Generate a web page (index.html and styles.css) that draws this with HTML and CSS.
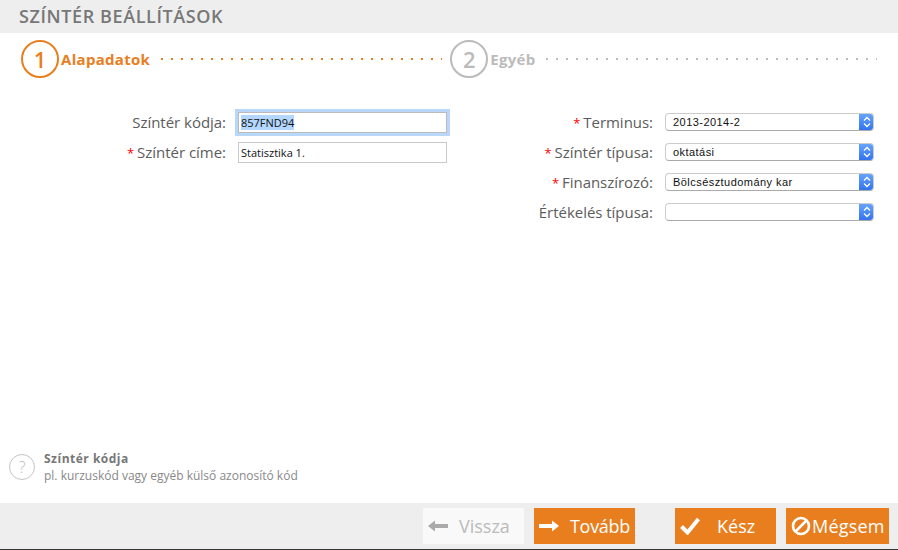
FILE: index.html
```html
<!DOCTYPE html>
<html lang="hu">
<head>
<meta charset="utf-8">
<title>Színtér beállítások</title>
<link rel="stylesheet" href="styles.css">
</head>
<body>
<div class="page">
  <header class="title-bar"><h1>SZÍNTÉR BEÁLLÍTÁSOK</h1></header>
  <nav class="steps">
    <div class="step active">
      <span class="num">1</span><span class="step-name">Alapadatok</span><span class="dots dots-a"></span>
    </div>
    <div class="step idle">
      <span class="num">2</span><span class="step-name">Egyéb</span><span class="dots dots-b"></span>
    </div>
  </nav>
  <main class="form">
    <div class="col col-left">
      <div class="row"><label class="lbl">Színtér kódja:</label><input class="txt focus" type="text" value="857FND94" id="code"></div>
      <div class="row"><label class="lbl"><span class="req">*</span> Színtér címe:</label><input class="txt" type="text" value="Statisztika 1."></div>
    </div>
    <div class="col col-right">
      <div class="row"><label class="lbl"><span class="req">*</span> Terminus:</label><div class="sel"><span class="val">2013-2014-2</span><span class="arrows"><svg width="8" height="12" viewBox="0 0 8 12"><path d="M1 4.5 4 1.5 7 4.5M1 7.5 4 10.5 7 7.5" fill="none" stroke="#fff" stroke-width="1.3"/></svg></span></div></div>
      <div class="row"><label class="lbl"><span class="req">*</span> Színtér típusa:</label><div class="sel"><span class="val">oktatási</span><span class="arrows"><svg width="8" height="12" viewBox="0 0 8 12"><path d="M1 4.5 4 1.5 7 4.5M1 7.5 4 10.5 7 7.5" fill="none" stroke="#fff" stroke-width="1.3"/></svg></span></div></div>
      <div class="row"><label class="lbl"><span class="req">*</span> Finanszírozó:</label><div class="sel"><span class="val">Bölcsésztudomány kar</span><span class="arrows"><svg width="8" height="12" viewBox="0 0 8 12"><path d="M1 4.5 4 1.5 7 4.5M1 7.5 4 10.5 7 7.5" fill="none" stroke="#fff" stroke-width="1.3"/></svg></span></div></div>
      <div class="row"><label class="lbl">Értékelés típusa:</label><div class="sel"><span class="val"></span><span class="arrows"><svg width="8" height="12" viewBox="0 0 8 12"><path d="M1 4.5 4 1.5 7 4.5M1 7.5 4 10.5 7 7.5" fill="none" stroke="#fff" stroke-width="1.3"/></svg></span></div></div>
    </div>
  </main>
  <aside class="help">
    <span class="q">?</span>
    <div class="help-text">
      <strong>Színtér kódja</strong>
      <span>pl. kurzuskód vagy egyéb külső azonosító kód</span>
    </div>
  </aside>
  <footer class="actions">
    <button class="btn disabled b-back"><svg width="20" height="14" viewBox="0 0 20 14"><path d="M0 7 7 1.5V5H20V9H7V12.5Z" fill="#aaa"/></svg><span class="t-back">Vissza</span></button>
    <button class="btn b-next"><svg width="20" height="14" viewBox="0 0 20 14"><path d="M20 7 13 1.5V5H0V9H13V12.5Z" fill="#fff"/></svg><span class="t-next">Tovább</span></button>
    <button class="btn b-done"><svg width="20" height="18" viewBox="0 0 20 18"><path d="M1.5 9.5 7.5 15.5 18.5 2" fill="none" stroke="#fff" stroke-width="4"/></svg><span class="t-done">Kész</span></button>
    <button class="btn b-cancel"><svg width="20" height="20" viewBox="0 0 20 20"><circle cx="10" cy="10" r="8" fill="none" stroke="#fff" stroke-width="2.6"/><path d="M4.5 15.5 15.5 4.5" stroke="#fff" stroke-width="2.6"/></svg><span class="t-cancel">Mégsem</span></button>
  </footer>
</div>
<script src="app.js"></script>
</body>
</html>
```
FILE: app.js
```js
var el = document.getElementById('code');
el.focus();
el.select();
```
FILE: styles.css
```css
* { box-sizing: border-box; }
html, body { margin: 0; padding: 0; height: 100%; background: #fff; overflow: hidden; }
body { font-family: "Open Sans", sans-serif; color: #555; }
.page { width: 898px; height: 550px; display: flex; flex-direction: column; border-bottom: 1px solid #333; }

.title-bar { height: 33px; background: #eee; padding-left: 19px; flex: none; }
.title-bar h1 { margin: 0; font-size: 18px; line-height: 33px; font-weight: 600; color: #777; letter-spacing: 0.6px; }

.steps { display: flex; height: 45px; padding: 7px 0 0 21px; flex: none; }
.step { display: flex; align-items: center; height: 38px; }
.num { width: 38px; height: 38px; border: 2px solid currentColor; border-radius: 50%; display: flex; align-items: center; justify-content: center; font-size: 22px; font-weight: 600; line-height: 1; flex: none; }
.step-name { font-size: 15px; font-weight: 700; margin-left: 2px; letter-spacing: 0.3px; }
.active { color: #e97e1e; }
.idle { color: #bbb; margin-left: 8px; }
.dots { height: 2px; margin-left: 11px; background-image: radial-gradient(circle at 1px 1px, currentColor 1px, transparent 1.2px); background-size: 10px 2px; background-repeat: repeat-x; }
.dots-a { width: 281px; }
.dots-b { width: 331px; }

.form { display: flex; flex: 1; padding-top: 29px; }
.col { display: flex; flex-direction: column; }
.col-left { width: 450px; }
.row { display: flex; align-items: center; height: 30px; }
.lbl { font-size: 15px; color: #5c5c5c; text-align: right; white-space: nowrap; letter-spacing: -0.03px; }
.col-left .lbl { width: 226px; }
.col-right .lbl { width: 203px; }
.req { color: #f00; font-size: 13px; margin-right: -1px; }

.txt { width: 209px; height: 21px; margin: 0 0 0 12px; padding: 0 2px; border: 1px solid #c8c8c8; border-radius: 0; background: #fff; font-family: "Open Sans", sans-serif; font-size: 11px; color: #111; outline: none; }
.txt.focus { box-shadow: 0 0 0 3px #b9d8f9; border-color: #bbb; }
.txt::selection { background: #b3d7ff; color: #111; }

.sel { width: 209px; height: 18px; margin-left: 12px; display: flex; background: #fff; border: 1px solid #ccc; border-bottom: 1px solid #aaa; border-radius: 4px; overflow: hidden; }
.val { flex: 1; font-family: "Liberation Sans", sans-serif; font-size: 11px; line-height: 16px; color: #111; padding-left: 7px; letter-spacing: 0.45px; }
.arrows { width: 15px; margin: -1px -1px -1px 0; background: linear-gradient(#6aa6fb, #2f71ee); display: flex; align-items: center; justify-content: center; }

.help { display: flex; align-items: center; padding: 0 0 8px 9px; height: 64px; flex: none; }
.q { width: 26px; height: 26px; border: 1px solid #c4c4c4; border-radius: 50%; color: #bbb; font-size: 16px; font-weight: 300; display: flex; align-items: center; justify-content: center; flex: none; margin-top: -1px; }
.help-text { display: flex; flex-direction: column; margin-left: 9px; font-size: 12px; line-height: 17px; color: #888; }
.help-text strong { font-weight: 700; color: #777; letter-spacing: 0.5px; }

.actions { height: 46px; background: #eee; display: flex; padding: 5px 9px 0 0; justify-content: flex-end; flex: none; }
.btn { height: 36px; width: 101px; border: 0; padding: 0 0 0 5px; background: #e97e1e; color: #fff; font-family: "Open Sans", sans-serif; font-size: 18px; display: flex; align-items: center; margin-left: 10px; }
.btn.disabled { background: #f9f9f9; color: #bbb; }
.t-back { margin-left: 11px; }
.t-next { margin-left: 11px; letter-spacing: -0.3px; }
.b-done { margin-left: 40px; }
.t-done { margin-left: 17px; }
.b-cancel { width: 103px; }
.t-cancel { margin-left: 1px; letter-spacing: 0.2px; }
```
